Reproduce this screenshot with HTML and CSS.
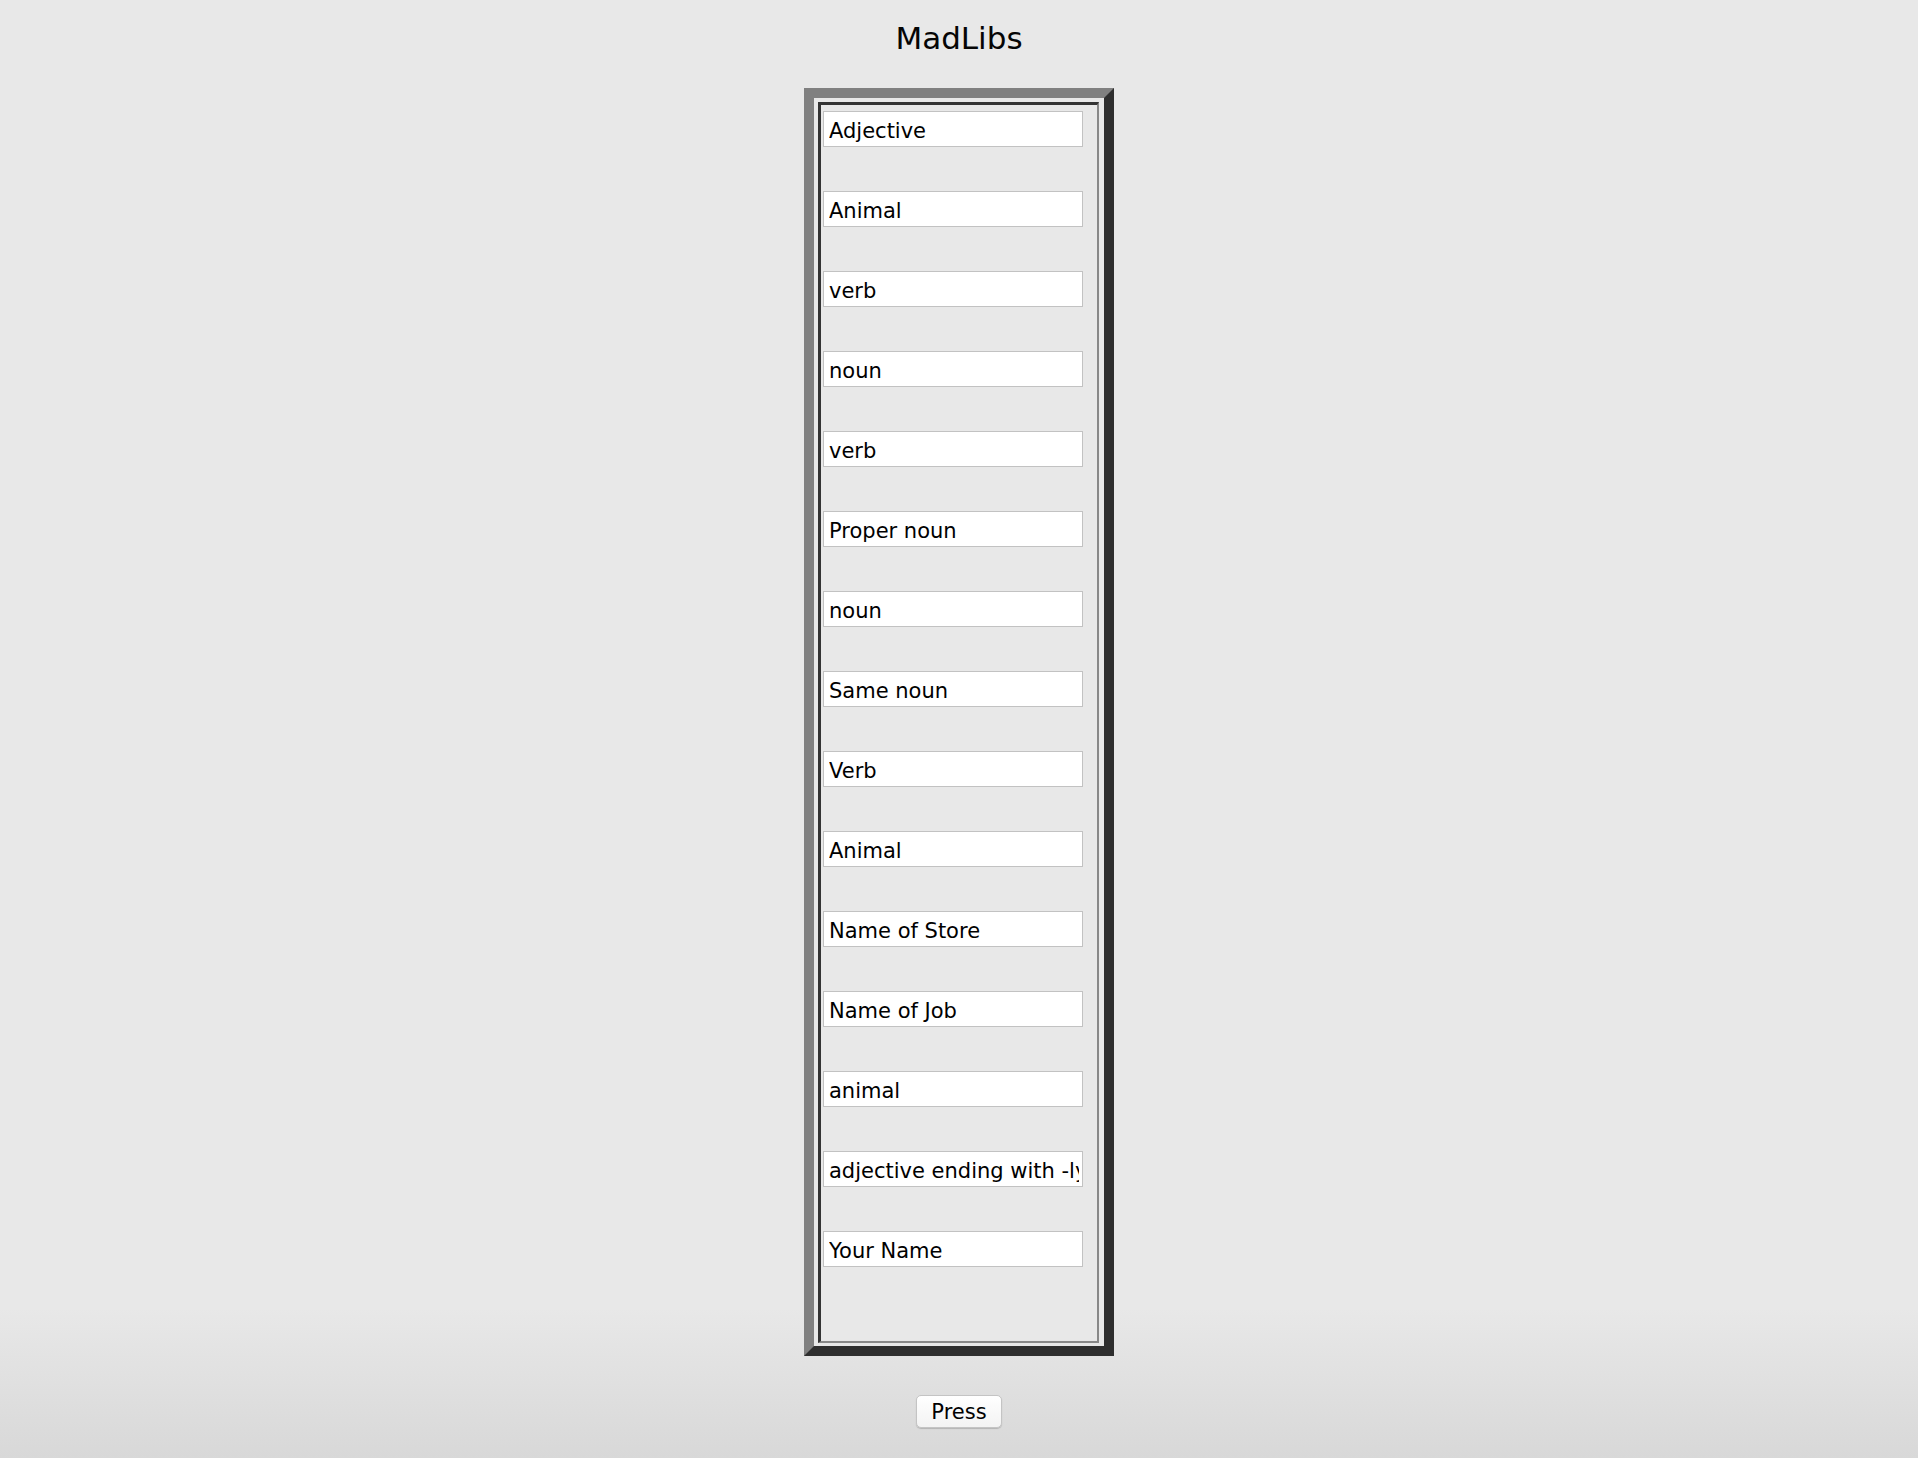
FILE: index.html
```
<!DOCTYPE html>
<html lang="en">
<head>
<meta charset="utf-8">
<title>MadLibs</title>
<link rel="stylesheet" href="styles.css">
</head>
<body>
<main class="page">
  <h1 class="title">MadLibs</h1>
  <div class="frame">
    <form class="inner">
      <input class="field" type="text" value="Adjective">
      <input class="field" type="text" value="Animal">
      <input class="field" type="text" value="verb">
      <input class="field" type="text" value="noun">
      <input class="field" type="text" value="verb">
      <input class="field" type="text" value="Proper noun">
      <input class="field" type="text" value="noun">
      <input class="field" type="text" value="Same noun">
      <input class="field" type="text" value="Verb">
      <input class="field" type="text" value="Animal">
      <input class="field" type="text" value="Name of Store">
      <input class="field" type="text" value="Name of Job">
      <input class="field" type="text" value="animal">
      <input class="field" type="text" value="adjective ending with -ly">
      <input class="field" type="text" value="Your Name">
    </form>
  </div>
  <button class="press" type="button">Press</button>
</main>
</body>
</html>
```

FILE: styles.css
```
html {
  min-height: 100%;
  background: linear-gradient(to bottom, #e8e8e8 0, #e8e8e8 calc(100% - 150px), #d8d8d8 100%);
}

body {
  margin: 0;
  min-height: 1458px;
  font-family: "DejaVu Sans", Verdana, sans-serif;
  color: #000;
}

.page {
  display: flex;
  flex-direction: column;
  align-items: center;
}

.title {
  margin: 20px 0 0;
  font-size: 31px;
  font-weight: normal;
  line-height: 36px;
  color: #050505;
}

.frame {
  box-sizing: border-box;
  width: 310px;
  margin-top: 32px;
  border-style: solid;
  border-width: 10px;
  border-color: #808080 #2e2e2e #2e2e2e #808080;
  padding: 4px 5px 3px 4px;
  background: #e8e8e8;
}

.inner {
  display: flex;
  flex-direction: column;
  align-items: flex-start;
  gap: 44px;
  margin: 0;
  border-style: solid;
  border-width: 3px 2px 2px 3px;
  border-color: #333 #888 #888 #333;
  padding: 6px 0 74px 2px;
}

.field {
  box-sizing: border-box;
  width: 260px;
  height: 36px;
  margin: 0;
  padding: 3px 3px 0 5px;
  border: 1px solid #c2c2c2;
  background: #fff;
  font-family: "DejaVu Sans", Verdana, sans-serif;
  font-size: 21px;
  color: #000;
  outline: none;
}

.press {
  box-sizing: border-box;
  width: 86px;
  height: 33px;
  margin-top: 39px;
  padding: 1px 0 0;
  border: 1px solid #c4c4c4;
  border-radius: 5px;
  background: linear-gradient(to bottom, #ffffff, #f3f3f3);
  box-shadow: 0 1px 1px rgba(0, 0, 0, 0.18);
  font-family: "DejaVu Sans", Verdana, sans-serif;
  font-size: 21px;
  color: #000;
}
```
